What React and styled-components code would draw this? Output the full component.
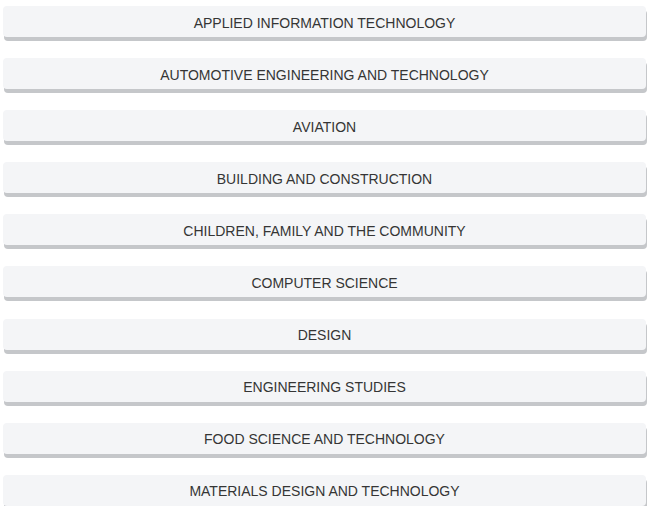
import React from 'react'
import styled, { createGlobalStyle } from 'styled-components'

const Global = createGlobalStyle`
    body{
        margin: 0;
        background: #fff;
        font-family: "Liberation Sans", Arial, sans-serif;
    }
`

const List = styled.div`
    display: flex;
    flex-direction: column;
    gap: 21.1px;
    padding: 6px 7px 0 3px;
`

const Subject = styled.a`
    display: flex;
    align-items: center;
    justify-content: center;
    height: 31px;
    padding-top: 2px;
    box-sizing: border-box;
    background: #f4f5f7;
    border-radius: 4px;
    box-shadow: 1px 4px 0 #c5c7ca;
    color: #353535;
    font-size: 14px;
    text-decoration: none;
    cursor: pointer;
`

const subjects = [
    'APPLIED INFORMATION TECHNOLOGY',
    'AUTOMOTIVE ENGINEERING AND TECHNOLOGY',
    'AVIATION',
    'BUILDING AND CONSTRUCTION',
    'CHILDREN, FAMILY AND THE COMMUNITY',
    'COMPUTER SCIENCE',
    'DESIGN',
    'ENGINEERING STUDIES',
    'FOOD SCIENCE AND TECHNOLOGY',
    'MATERIALS DESIGN AND TECHNOLOGY',
]

function App() {
    return (
        <>
            <Global />
            <List>
                {subjects.map(s => <Subject key={s}>{s}</Subject>)}
            </List>
        </>
    )
}

export default App
